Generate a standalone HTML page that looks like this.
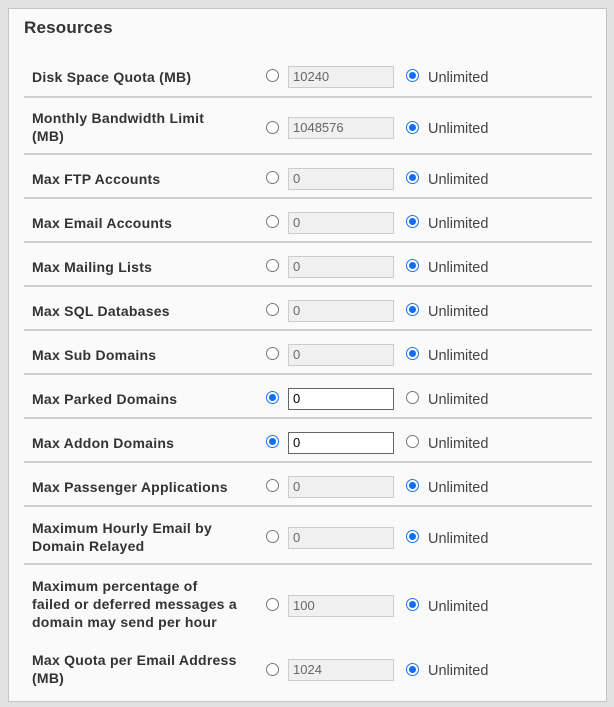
<!DOCTYPE html>
<html><head><style>
body{margin:0;width:614px;height:707px;background:#e2e2e2;font-family:"Liberation Sans",sans-serif;color:#333;overflow:hidden;position:relative}
.panel{position:absolute;left:8px;top:8px;width:597px;height:692px;background:#fafafa;border:1px solid #c4c4c4}
h2{position:absolute;left:24px;top:18px;margin:0;font-size:17px;font-weight:bold;color:#333;letter-spacing:0.2px}
.row{position:absolute;left:24px;width:568px;display:flex;align-items:center}
.row.b::after{content:"";position:absolute;left:0;right:0;bottom:0;height:2px;background:#cfcfcf}
.lab{position:absolute;left:8px;width:240px;font-weight:bold;font-size:14px;line-height:18px;letter-spacing:0.25px;white-space:nowrap}
.r{position:absolute;width:11px;height:11px;border:1px solid #777;border-radius:50%;background:#fff}
.r.on{border-color:#1a73e8;background:#fff}
.r.on::after{content:"";position:absolute;left:2px;top:2px;width:7px;height:7px;border-radius:50%;background:#0d6efd}
.in{position:absolute;left:264px;width:100px;height:20px;border:1px solid #ccc;background:#f0f0f0;font-size:13px;line-height:20px;padding-left:4px;color:#666;box-sizing:content-box}
.in.act{border-color:#666;background:#fff;color:#000}
.u{position:absolute;left:404px;font-size:14.5px;color:#444;margin-top:2px}
</style></head><body>
<div class="panel"></div>
<h2>Resources</h2>

<div class="row b" style="top:56px;height:42px"><div class="lab" style="top:12px">Disk Space Quota (MB)</div><span class="r" style="top:13px;left:242px"></span><div class="in" style="top:10px">10240</div><span class="r on" style="top:13px;left:382px"></span><span class="u" style="top:12px">Unlimited</span></div>

<div class="row b" style="top:98px;height:57px"><div class="lab" style="top:11px">Monthly Bandwidth Limit<br>(MB)</div><span class="r" style="top:23px;left:242px"></span><div class="in" style="top:19px">1048576</div><span class="r on" style="top:23px;left:382px"></span><span class="u" style="top:21px">Unlimited</span></div>

<div class="row b" style="top:155px;height:44px"><div class="lab" style="top:15px">Max FTP Accounts</div><span class="r" style="top:16px;left:242px"></span><div class="in" style="top:13px">0</div><span class="r on" style="top:16px;left:382px"></span><span class="u" style="top:15px">Unlimited</span></div>

<div class="row b" style="top:199px;height:44px"><div class="lab" style="top:15px">Max Email Accounts</div><span class="r" style="top:16px;left:242px"></span><div class="in" style="top:13px">0</div><span class="r on" style="top:16px;left:382px"></span><span class="u" style="top:15px">Unlimited</span></div>

<div class="row b" style="top:243px;height:44px"><div class="lab" style="top:15px">Max Mailing Lists</div><span class="r" style="top:16px;left:242px"></span><div class="in" style="top:13px">0</div><span class="r on" style="top:16px;left:382px"></span><span class="u" style="top:15px">Unlimited</span></div>

<div class="row b" style="top:287px;height:44px"><div class="lab" style="top:15px">Max SQL Databases</div><span class="r" style="top:16px;left:242px"></span><div class="in" style="top:13px">0</div><span class="r on" style="top:16px;left:382px"></span><span class="u" style="top:15px">Unlimited</span></div>

<div class="row b" style="top:331px;height:44px"><div class="lab" style="top:15px">Max Sub Domains</div><span class="r" style="top:16px;left:242px"></span><div class="in" style="top:13px">0</div><span class="r on" style="top:16px;left:382px"></span><span class="u" style="top:15px">Unlimited</span></div>

<div class="row b" style="top:375px;height:44px"><div class="lab" style="top:15px">Max Parked Domains</div><span class="r on" style="top:16px;left:242px"></span><div class="in act" style="top:13px">0</div><span class="r" style="top:16px;left:382px"></span><span class="u" style="top:15px">Unlimited</span></div>

<div class="row b" style="top:419px;height:44px"><div class="lab" style="top:15px">Max Addon Domains</div><span class="r on" style="top:16px;left:242px"></span><div class="in act" style="top:13px">0</div><span class="r" style="top:16px;left:382px"></span><span class="u" style="top:15px">Unlimited</span></div>

<div class="row b" style="top:463px;height:44px"><div class="lab" style="top:15px">Max Passenger Applications</div><span class="r" style="top:16px;left:242px"></span><div class="in" style="top:13px">0</div><span class="r on" style="top:16px;left:382px"></span><span class="u" style="top:15px">Unlimited</span></div>

<div class="row b" style="top:507px;height:58px"><div class="lab" style="top:12px">Maximum Hourly Email by<br>Domain Relayed</div><span class="r" style="top:23px;left:242px"></span><div class="in" style="top:20px">0</div><span class="r on" style="top:23px;left:382px"></span><span class="u" style="top:22px">Unlimited</span></div>

<div class="row" style="top:565px;height:76px"><div class="lab" style="top:12px">Maximum percentage of<br>failed or deferred messages a<br>domain may send per hour</div><span class="r" style="top:33px;left:242px"></span><div class="in" style="top:30px">100</div><span class="r on" style="top:33px;left:382px"></span><span class="u" style="top:32px">Unlimited</span></div>

<div class="row" style="top:641px;height:55px"><div class="lab" style="top:10px">Max Quota per Email Address<br>(MB)</div><span class="r" style="top:22px;left:242px"></span><div class="in" style="top:18px">1024</div><span class="r on" style="top:22px;left:382px"></span><span class="u" style="top:20px">Unlimited</span></div>
</body></html>
